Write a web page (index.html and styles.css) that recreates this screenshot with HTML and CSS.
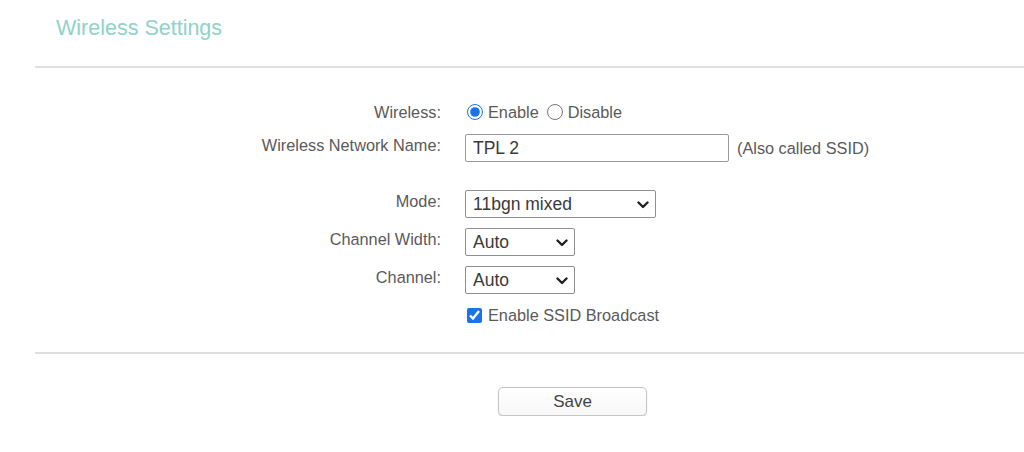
FILE: index.html
```html
<!DOCTYPE html>
<html lang="en">
<head>
    <meta charset="UTF-8">
    <title>Wireless Settings</title>
    <link rel="stylesheet" href="styles.css">
</head>
<body>
    <h1 class="title">Wireless Settings</h1>
    <div class="divider"></div>

    <form class="settings">
        <div class="row row-first">
            <label class="label">Wireless:</label>
            <div class="field">
                <input type="radio" name="wireless" id="enable" class="radio" checked>
                <label for="enable" class="opt">Enable</label>
                <input type="radio" name="wireless" id="disable" class="radio radio-second">
                <label for="disable" class="opt">Disable</label>
            </div>
        </div>
        <div class="row row-name">
            <label class="label label-up">Wireless Network Name:</label>
            <div class="field">
                <input type="text" class="text" value="TPL 2">
                <span class="hint">(Also called SSID)</span>
            </div>
        </div>
        <div class="row row-mode">
            <label class="label label-up">Mode:</label>
            <div class="field">
                <span class="select-wrap">
                    <select class="select select-wide">
                        <option>11bgn mixed</option>
                    </select>
                    <svg class="chevron" width="12" height="8" viewBox="0 0 12 8"><path d="M1.5 1.5 L6 6 L10.5 1.5" fill="none" stroke="#222" stroke-width="2.4" stroke-linecap="round" stroke-linejoin="round"/></svg>
                </span>
            </div>
        </div>
        <div class="row row-next">
            <label class="label label-up">Channel Width:</label>
            <div class="field">
                <span class="select-wrap">
                    <select class="select">
                        <option>Auto</option>
                    </select>
                    <svg class="chevron" width="12" height="8" viewBox="0 0 12 8"><path d="M1.5 1.5 L6 6 L10.5 1.5" fill="none" stroke="#222" stroke-width="2.4" stroke-linecap="round" stroke-linejoin="round"/></svg>
                </span>
            </div>
        </div>
        <div class="row row-next">
            <label class="label label-up">Channel:</label>
            <div class="field">
                <span class="select-wrap">
                    <select class="select">
                        <option>Auto</option>
                    </select>
                    <svg class="chevron" width="12" height="8" viewBox="0 0 12 8"><path d="M1.5 1.5 L6 6 L10.5 1.5" fill="none" stroke="#222" stroke-width="2.4" stroke-linecap="round" stroke-linejoin="round"/></svg>
                </span>
            </div>
        </div>
        <div class="row row-check">
            <span class="label"></span>
            <div class="field">
                <input type="checkbox" id="broadcast" class="check" checked>
                <label for="broadcast" class="opt">Enable SSID Broadcast</label>
            </div>
        </div>
    </form>

    <div class="divider divider-bottom"></div>

    <div class="actions">
        <button type="button" class="save">Save</button>
    </div>
</body>
</html>
```

FILE: styles.css
```css
body {
    margin: 0;
    font-family: "Liberation Sans", Arial, sans-serif;
    background-color: #fff;
    color: #555;
}
.title {
    margin: 0;
    padding: 16px 0 0 56px;
    font-size: 21.5px;
    line-height: 24px;
    font-weight: normal;
    color: #8fd2ca;
}
.divider {
    height: 2px;
    margin: 26px 0 0 35px;
    background-color: #e0e0e0;
}
.divider-bottom {
    margin-top: 23px;
}
.settings {
    margin: 0;
}
.row {
    display: flex;
    align-items: center;
    height: 28px;
}
.row-first {
    margin-top: 30px;
}
.row-name {
    margin-top: 8px;
}
.row-mode {
    margin-top: 28px;
}
.row-next {
    margin-top: 10px;
}
.row-check {
    margin-top: 7px;
}
.label {
    width: 441px;
    margin-right: 24px;
    text-align: right;
    font-size: 16.3px;
    color: #5a5a5a;
}
.label-up {
    padding-bottom: 6px;
}
.field {
    display: flex;
    align-items: center;
    font-size: 16.3px;
    color: #5a5a5a;
}
.radio {
    width: 16px;
    height: 16px;
    margin: 0 5px 0 2px;
    accent-color: #1a73e8;
}
.radio-second {
    margin-left: 8px;
}
.opt {
    color: #5a5a5a;
}
.text {
    box-sizing: border-box;
    width: 264px;
    height: 28px;
    padding: 0 7px;
    border: 1px solid #9a9a9a;
    border-radius: 2px;
    font-family: "Liberation Sans", Arial, sans-serif;
    font-size: 17.5px;
    color: #3a3a3a;
}
.hint {
    margin-left: 8px;
}
.select-wrap {
    position: relative;
    display: inline-block;
    height: 28px;
}
.select {
    box-sizing: border-box;
    width: 110px;
    height: 28px;
    padding: 0 7px;
    border: 1px solid #8f8f8f;
    border-radius: 2px;
    background-color: #fff;
    font-family: "Liberation Sans", Arial, sans-serif;
    font-size: 17.5px;
    color: #3a3a3a;
    appearance: none;
    -webkit-appearance: none;
}
.select-wide {
    width: 191px;
}
.chevron {
    position: absolute;
    right: 7px;
    top: 11px;
    pointer-events: none;
}
.check {
    width: 15px;
    height: 15px;
    margin: 0 6px 0 2px;
    accent-color: #1a73e8;
}
.actions {
    padding: 33px 0 0 498px;
}
.save {
    width: 149px;
    height: 29px;
    border: 1px solid #c4c4c4;
    border-radius: 5px;
    background: linear-gradient(#fff, #f7f7f7);
    box-shadow: 0 1px 1px rgba(0, 0, 0, 0.2);
    font-family: "Liberation Sans", Arial, sans-serif;
    font-size: 17px;
    color: #444;
    cursor: pointer;
}
```
